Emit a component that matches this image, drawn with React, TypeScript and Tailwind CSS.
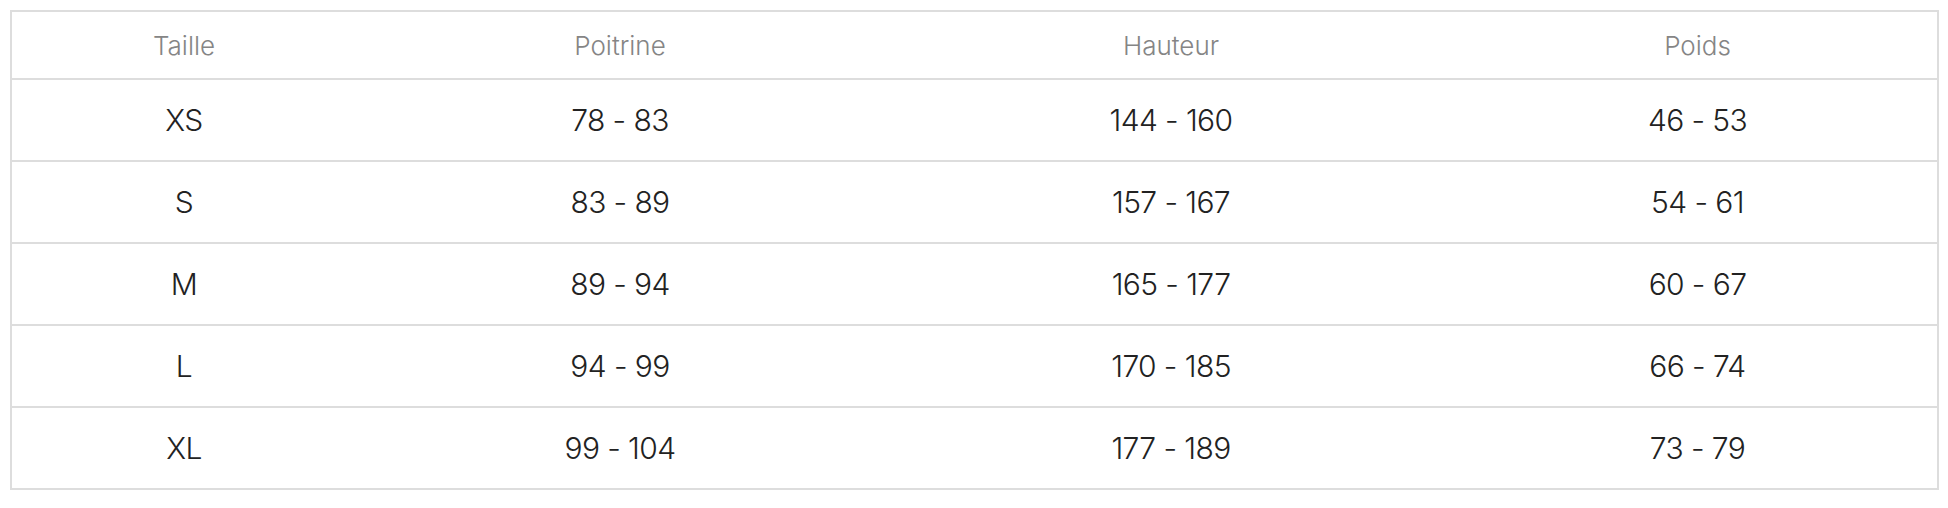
const headers = ["Taille", "Poitrine", "Hauteur", "Poids"];

const rows = [
  ["XS", "78 - 83", "144 - 160", "46 - 53"],
  ["S", "83 - 89", "157 - 167", "54 - 61"],
  ["M", "89 - 94", "165 - 177", "60 - 67"],
  ["L", "94 - 99", "170 - 185", "66 - 74"],
  ["XL", "99 - 104", "177 - 189", "73 - 79"],
];

const cols = "grid grid-cols-[344px_528px_574px_1fr]";

export default function App() {
  return (
    <main className="min-h-screen bg-white p-[10px] font-['Inter',sans-serif]">
      <div className="w-[1929px] border-2 border-[#dddddd]">
        <div className={`${cols} h-[66px] items-center text-center text-[26px] font-light text-[#858585]`}>
          {headers.map((h) => (
            <div key={h}>{h}</div>
          ))}
        </div>
        {rows.map((r) => (
          <div
            key={r[0]}
            className={`${cols} h-[82px] items-center border-t-2 border-[#dddddd] text-center text-[30px] font-[350] tracking-[-0.02em] text-[#222222]`}>
            {r.map((c, i) => (
              <div key={i}>{c}</div>
            ))}
          </div>
        ))}
      </div>
    </main>
  );
}
